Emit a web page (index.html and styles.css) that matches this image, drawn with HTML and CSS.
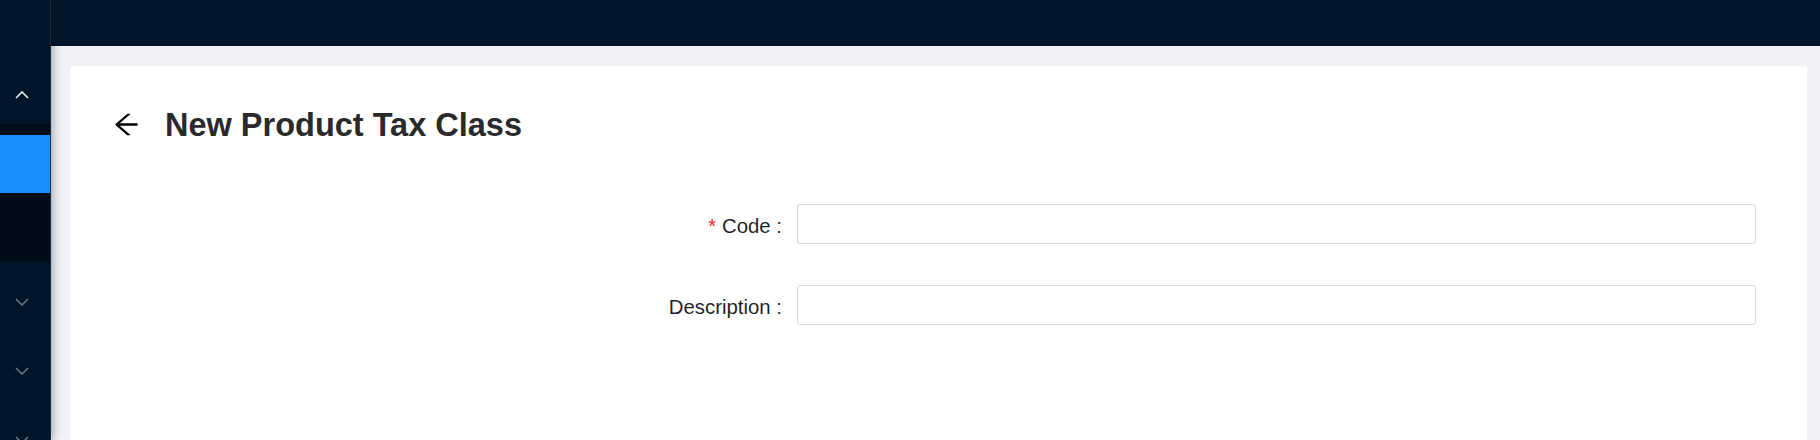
FILE: index.html
```html
<!DOCTYPE html>
<html lang="en">
<head>
<meta charset="utf-8">
<title>New Product Tax Class</title>
<link rel="stylesheet" href="styles.css">
</head>
<body>
<div class="layout">
  <aside class="sider">
    <div class="sider-top">
      <svg class="chev chev-up" viewBox="0 0 14 9" width="14" height="9"><polyline points="1,8 7,2 13,8" fill="none" stroke="currentColor" stroke-width="1.6"/></svg>
    </div>
    <div class="submenu">
      <div class="menu-item selected"></div>
      <div class="menu-item-dark"></div>
    </div>
    <div class="menu-row"><svg class="chev" viewBox="0 0 14 9" width="14" height="9"><polyline points="1,1 7,7 13,1" fill="none" stroke="currentColor" stroke-width="1.4"/></svg></div>
    <div class="menu-row"><svg class="chev" viewBox="0 0 14 9" width="14" height="9"><polyline points="1,1 7,7 13,1" fill="none" stroke="currentColor" stroke-width="1.4"/></svg></div>
    <div class="menu-row"><svg class="chev" viewBox="0 0 14 9" width="14" height="9"><polyline points="1,1 7,7 13,1" fill="none" stroke="currentColor" stroke-width="1.4"/></svg></div>
  </aside>
  <div class="main">
    <header class="header"></header>
    <div class="content">
      <section class="card">
        <div class="page-head">
          <svg class="back" viewBox="64 64 896 896" width="27" height="27"><path d="M872 474H286.9l350.2-304c5.6-4.9 2.2-14-5.2-14h-88.5c-3.9 0-7.6 1.4-10.5 3.9L155 487.8a31.96 31.96 0 000 48.3L535.1 866c1.5 1.3 3.3 2 5.2 2h91.5c7.4 0 10.8-9.2 5.2-14L286.9 550H872c4.4 0 8-3.6 8-8v-60c0-4.4-3.6-8-8-8z" fill="currentColor"/></svg>
          <h1 class="title">New Product Tax Class</h1>
        </div>
        <form class="form">
          <label class="label" for="code"><span class="req">*</span>Code :</label>
          <input class="input" id="code" type="text">
          <label class="label" for="desc">Description :</label>
          <input class="input" id="desc" type="text">
        </form>
      </section>
    </div>
  </div>
</div>
</body>
</html>
```

FILE: styles.css
```css
* { box-sizing: border-box; }
html, body { margin: 0; padding: 0; }
body {
  font-family: "Liberation Sans", Arial, Helvetica, sans-serif;
  background: #f0f2f5;
  color: rgba(0, 0, 0, 0.85);
}
.layout {
  display: flex;
  height: 440px;
  overflow: hidden;
}
.sider {
  width: 51px;
  flex: none;
  background: #001529;
  border-right: 1px solid #1c2b3c;
  display: flex;
  flex-direction: column;
  box-shadow: 2px 0 8px rgba(0, 21, 41, 0.35);
  position: relative;
  z-index: 2;
  overflow: hidden;
}
.sider-top {
  height: 124px;
  flex: none;
  display: flex;
  align-items: flex-end;
  justify-content: center;
  padding-bottom: 25px;
  padding-right: 6px;
}
.chev { display: block; color: rgba(255, 255, 255, 0.45); }
.chev-up { color: rgba(255, 255, 255, 0.9); }
.submenu {
  flex: none;
  background: #000c17;
  padding-top: 11px;
}
.menu-item.selected {
  height: 58px;
  background: #1890ff;
}
.menu-item-dark { height: 69px; }
.menu-row {
  height: 69px;
  flex: none;
  display: flex;
  justify-content: center;
  padding-top: 36px;
  padding-right: 6px;
}
.main {
  flex: 1;
  display: flex;
  flex-direction: column;
  min-width: 0;
}
.header {
  height: 46px;
  flex: none;
  background: #001529;
}
.content {
  flex: 1;
  display: flex;
  padding: 20px 13px 0 19px;
}
.card {
  flex: 1;
  background: #fff;
  border-radius: 3px 3px 0 0;
  padding: 38px 51px 0 43px;
}
.page-head {
  display: flex;
  align-items: center;
  height: 41px;
}
.back { display: block; color: #000; margin-right: 25px; }
.title {
  margin: 0;
  font-size: 32.5px;
  font-weight: 700;
  color: #2a2a2a;
  line-height: 40px;
}
.form {
  margin-top: 59px;
  margin-left: -43px;
  display: grid;
  grid-template-columns: 712px 1fr;
  grid-auto-rows: 40px;
  column-gap: 15px;
  row-gap: 41px;
  align-items: center;
}
.label {
  text-align: right;
  font-size: 20.4px;
  color: rgba(0, 0, 0, 0.88);
  height: 40px;
  line-height: 35px;
  padding-top: 5px;
}
.req {
  color: #f5222d;
  margin-right: 6px;
  font-size: 20px;
}
.input {
  height: 40px;
  border: 1px solid #d9d9d9;
  border-radius: 3px;
  font-size: 20px;
  padding: 4px 11px;
  font-family: inherit;
  outline: none;
  width: 100%;
}
```
